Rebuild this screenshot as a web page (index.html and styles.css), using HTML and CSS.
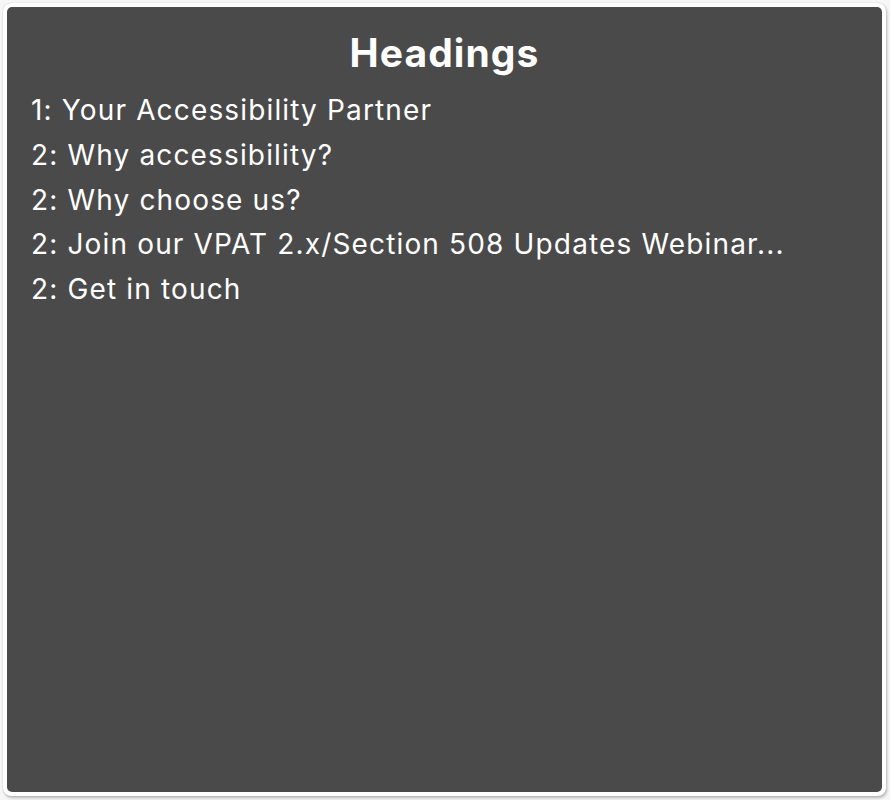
FILE: index.html
```html
<!DOCTYPE html>
<html lang="en">
<head>
    <meta charset="UTF-8">
    <title>Headings</title>
    <link rel="stylesheet" href="styles.css">
</head>
<body>
    <div class="window">
        <div class="panel">
            <h1 class="panel-title">Headings</h1>
            <ul class="heading-list">
                <li>1: Your Accessibility Partner</li>
                <li>2: Why accessibility?</li>
                <li>2: Why choose us?</li>
                <li>2: Join our VPAT 2.x/Section 508 Updates Webinar...</li>
                <li>2: Get in touch</li>
            </ul>
        </div>
    </div>
</body>
</html>
```

FILE: styles.css
```css
html, body {
    height: 100%;
}
body {
    margin: 0;
    padding: 3px 4px 4px 3px;
    box-sizing: border-box;
    background-color: #f6f6f6;
    font-family: Inter, "Noto Sans", sans-serif;
}
.window {
    height: 100%;
    box-sizing: border-box;
    padding: 4px;
    background: #fff;
    border-radius: 8px;
    box-shadow: 0 0 1px rgba(0,0,0,0.25), 1px 2px 3px rgba(0,0,0,0.25);
}
.panel {
    height: 100%;
    box-sizing: border-box;
    background: #4a4a4a;
    border-radius: 5px;
    padding: 25px 24px;
    color: #fff;
}
.panel-title {
    margin: 0 0 14px;
    text-align: center;
    font-size: 39px;
    font-weight: 700;
    line-height: 42px;
    letter-spacing: 1.1px;
}
.heading-list {
    list-style: none;
    margin: 0;
    padding: 0;
    font-size: 28px;
    line-height: 44.75px;
    letter-spacing: 1.15px;
}
```
